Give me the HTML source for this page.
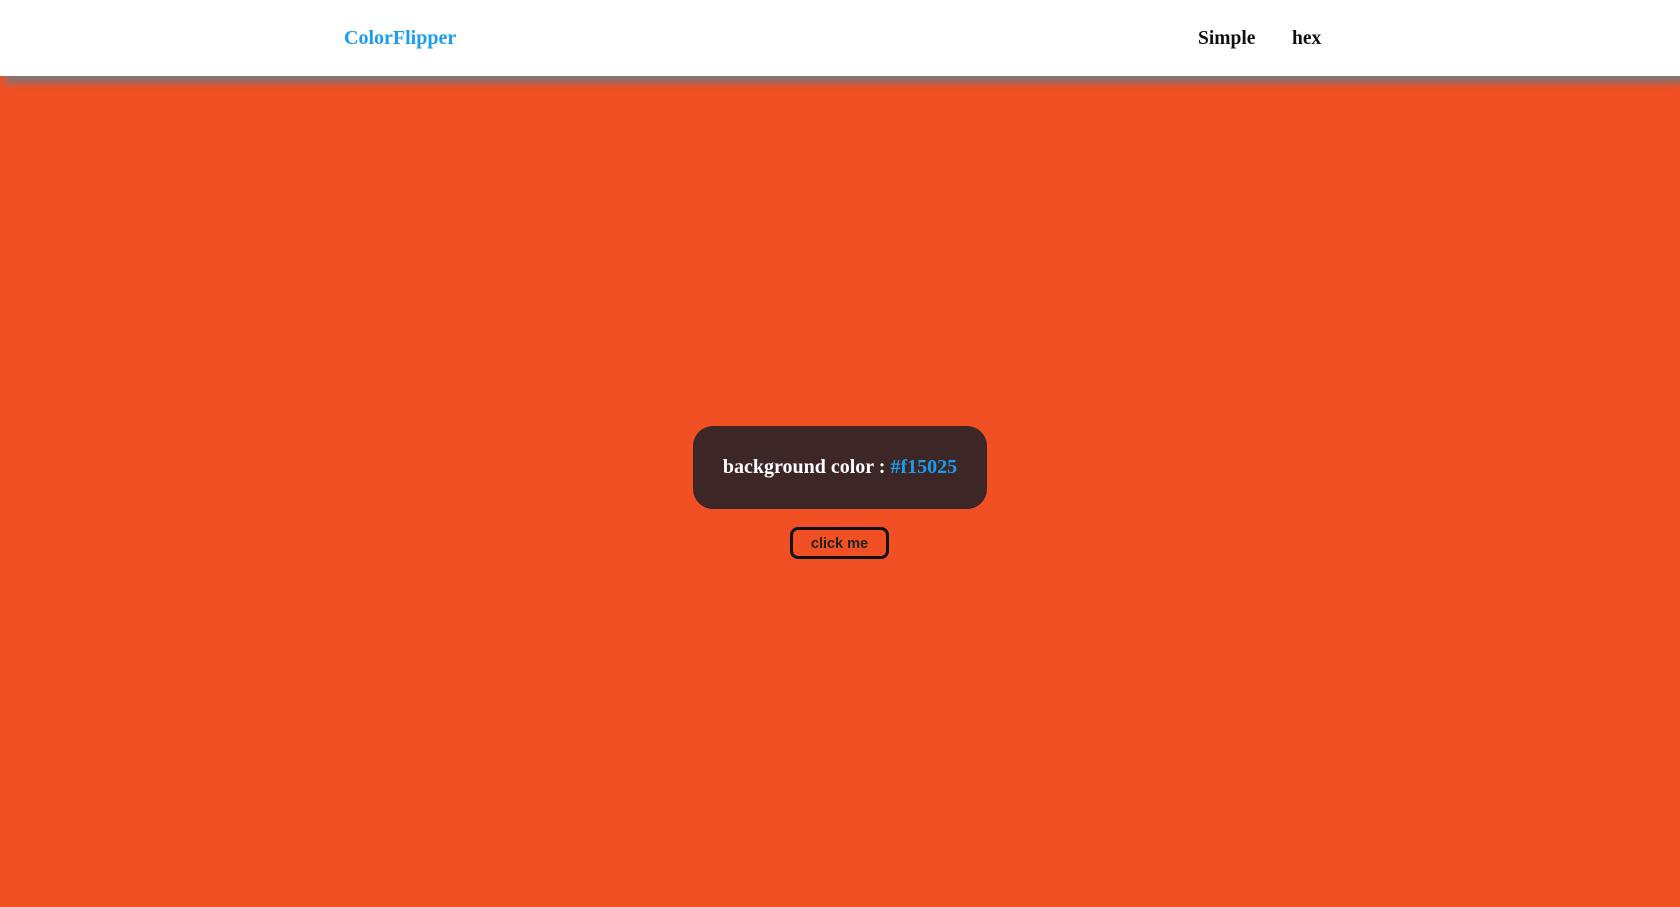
<!DOCTYPE html>
<html><head><style>
html,body{margin:0;padding:0;width:1680px;height:907px;overflow:hidden;background:#f15025;font-family:"Liberation Serif",serif;}
nav{position:absolute;left:0;top:0;width:1680px;height:76px;background:#fff;box-shadow:5px 7px 7px rgba(120,120,120,0.95);z-index:2;}
.logo{position:absolute;left:344px;top:27px;font-size:20px;font-weight:bold;color:#1a9cf0;}
.l{position:absolute;top:28px;font-size:19.5px;font-weight:bold;color:#111;}
.box{position:absolute;left:693px;top:426px;width:294px;height:83px;background:#3c2626;border-radius:20px;color:#fff;font-weight:bold;font-size:20px;text-align:center;line-height:83px;}
.box span{color:#1a9cf0;}
.btn{position:absolute;left:790px;top:527px;width:93px;height:26px;border:3px solid #111;border-radius:8px;font-family:"Liberation Sans",sans-serif;font-size:14.5px;font-weight:bold;text-align:center;line-height:28px;color:#222;}
</style></head><body>
<nav><div class="logo">ColorFlipper</div><div class="l" style="left:1198px">Simple</div><div class="l" style="left:1292px">hex</div></nav>
<div class="box">background color : <span>#f15025</span></div>
<div class="btn">click me</div>
</body></html>
